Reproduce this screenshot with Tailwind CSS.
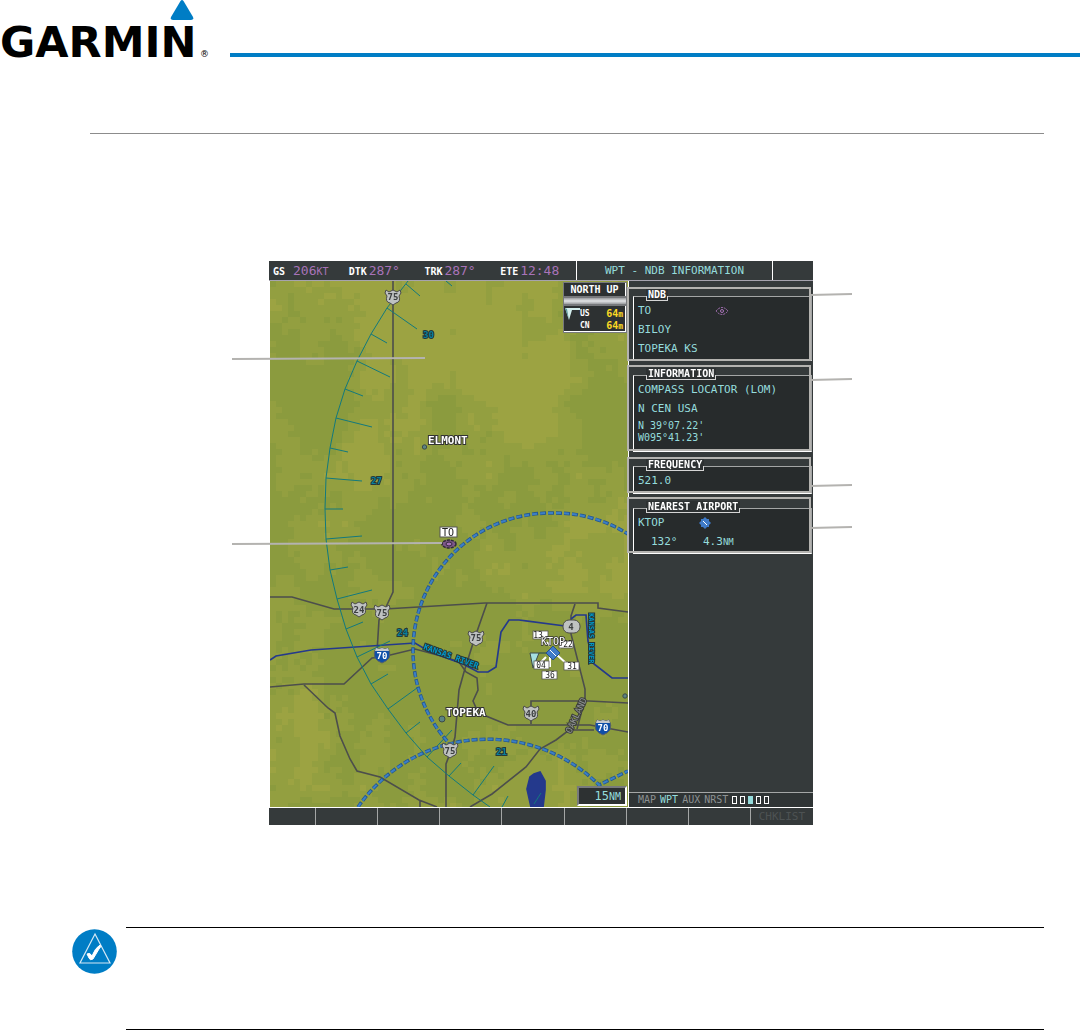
<!DOCTYPE html>
<html lang="en">
<head>
<meta charset="utf-8">
<meta name="viewport" content="width=device-width, initial-scale=1.0">
<title>NDB Information</title>
<script src="https://cdn.jsdelivr.net/npm/@tailwindcss/browser@4"></script>
</head>
<body class="bg-white font-['Liberation_Sans',sans-serif]">

<header class="flex h-[61px]">
    <svg class="w-[230px] h-[61px] shrink-0 overflow-visible" viewBox="0 0 230 61" role="img" aria-label="Garmin">
        <path d="M180.500 1 Q182 -1 183.500 1 L193 17 Q194 20 191 20 H173 Q170 20 171 17 Z" fill="#007dc5"/>
        <text x="0" y="57" font-family="DejaVu Sans" font-weight="bold" font-size="43">GARMIN</text>
        <text x="200" y="57" font-family="DejaVu Sans" font-size="9">®</text>
    </svg>
    <div class="flex-1 mt-[53px] h-1 bg-[#007dc5]"></div>
</header>

<main>
    <hr class="mt-[72px] ml-[90px] mr-9 border-t border-[#8c8c8c]">

    <figure class="relative mt-[127px] mx-auto max-w-[544px] left-px bg-[#353a3b] font-['DejaVu_Sans_Mono',monospace]">
        <!-- status bar -->
        <div id="statusBar" class="flex h-5 border-b border-[#a6a3ae] text-[13px] leading-[20px] text-[#a873b8]">
            <div class="w-[308px] pl-1 grid grid-cols-4 border-r border-white whitespace-nowrap">
                <div><span class="mr-2 text-[10px] font-bold text-white">GS</span>206<span class="text-[10px]">KT</span></div>
                <div><span class="text-[10px] font-bold text-white">DTK</span> <span class="-ml-1.5">287°</span></div>
                <div><span class="text-[10px] font-bold text-white">TRK</span> <span class="-ml-1.5">287°</span></div>
                <div><span class="text-[10px] font-bold text-white">ETE</span> <span class="-ml-1.5">12:48</span></div>
            </div>
            <h1 class="w-[196px] text-center text-[11px] text-[#95dcdc] border-r border-white">WPT - NDB INFORMATION</h1>
        </div>

        <div class="flex h-[526px]">
            <!-- map -->
            <div id="map" class="relative flex-1 overflow-hidden border-l border-white">
                <canvas id="terrain" width="358" height="526" class="absolute inset-0 size-full"></canvas>
                <svg class="absolute inset-0 size-full" viewBox="270 281 358 526" preserveAspectRatio="none" font-family="DejaVu Sans Mono">
                    <defs>
                        <g id="us">
                            <path d="M-7 -7 L-4 -5 L0 -7 L4 -5 L7 -7 L8 -4 L6 -1 Q8 5 3 6 L0 8 L-3 6 Q-8 5 -6 -1 L-8 -4 Z" fill="#bfc2c2" stroke="#4b4b4b"/>
                        </g>
                        <g id="interstate">
                            <path d="M-6 -7 L-3 -6 L0 -7 L3 -6 L6 -7 Q9 -2 7 3 Q5 6 0 8 Q-5 6 -7 3 Q-9 -2 -6 -7 Z" fill="#0e4fa8" stroke="#56606a"/>
                            <path d="M-6 -7 L-3 -6 L0 -7 L3 -6 L6 -7 L7 -4 H-7 Z" fill="#c4c8cc"/>
                        </g>
                        <g id="ndb">
                            <ellipse rx="7" ry="4" fill="#7d5789" stroke="#2f2937" stroke-width="1.500" stroke-dasharray="3 1"/>
                            <ellipse rx="3" ry="2" fill="#a873b8" stroke="#2f2937"/>
                        </g>
                    </defs>

                    <!-- roads -->
                    <g fill="none" stroke="#4c4e4c" stroke-width="1.6">
                        <path d="M393 281 V592 L386 607 L379 620 L377 652"/>
                        <path d="M270 597 H292 L334 609 H385 L485 603 H598 V608 L628 612"/>
                        <path d="M487 603 L474 640 L464 672 L459 690 L455 737 L452 748 L446 764 V807"/>
                        <path d="M270 687 L304 684 H344 L372 658 L382 657 L415 649 L445 657 L459 662 L466 672 L477 678 L478 690 L473 701 L477 710 L486 716 L508 725 H590 L628 732"/>
                        <path d="M304 685 L328 708 L335 713 L340 736 L350 759 L357 771 L380 777 L419 800 L437 807 M420 800 V807"/>
                        <path d="M575 604 L571 616 V634 L585 689 V699 L577 729"/>
                        <path d="M531 724 V701 H589 L628 703"/>
                        <path d="M470 807 L492 794 L526 767 L540 749 L556 740 L569 730 H594"/>
                    </g>

                    <!-- water -->
                    <g fill="none" stroke="#24398c" stroke-width="1.7">
                        <path d="M270 660 L276 656 L311 650 L415 643 L430 652 L463 664 L478 672 H488 L496 667 L501 632 L509 620 H519 L565 626"/>
                        <path d="M571 619 L576 615 H586 L588 641 L594 664 L612 678 H628"/>
                        <path d="M540 772 L545 781 V790 L543 807 H531 L527 789 L530 777 L534 774 Z" fill="#24398c"/>
                    </g>

                    <!-- compass arc -->
                    <g fill="none" stroke="#12797d" stroke-width="1">
                        <path d="M408 281 L387 308 L371 334 L357 361 L345 389 L336 418 L330 448 L326 478 L325 509 L326 539 L330 570 L337 599 L346 629 L357 657 L371 684 L388 709 L406 733 L427 757 L449 776 L473 795 L490 807"/>
                        <path d="M406 284 L420 296 M387 308 L417 329 M371 334 L387 343 M357 361 L390 377 M345 389 L363 396 M336 418 L372 427 M330 448 L348 452 M326 478 L362 481 M325 509 H343 M326 539 L362 536 M330 570 L348 567 M337 599 L372 590 M346 629 L363 622 M357 657 L390 641 M371 684 L388 674 M388 709 L417 688 M406 733 L420 722 M427 757 L452 730 M449 776 L461 763 M473 795 L494 766 M502 807 L508 796 M446 281 L452 286 M534 804 L541 793"/>
                    </g>

                    <!-- airspace rings -->
                    <g fill="none">
                        <g stroke="#24588f" stroke-width="3.5" stroke-dasharray="6 2">
                            <path id="ringA" d="M447 741 A137.500 137.500 0 0 1 551 513 A137.500 137.500 0 0 1 628 534"/>
                            <path id="ringB" d="M358 807 A158 158 0 0 1 599 785 L628 771"/>
                        </g>
                        <g stroke="#3c7fc6" stroke-width="2" stroke-dasharray="5 3">
                            <use href="#ringA"/>
                            <use href="#ringB"/>
                        </g>
                    </g>

                    <!-- road shields -->
                    <use href="#us" x="393" y="297"/><use href="#us" x="359" y="609"/><use href="#us" x="382" y="612"/>
                    <use href="#us" x="476" y="638"/><use href="#us" x="531" y="713"/><use href="#us" x="450" y="750"/>
                    <use href="#interstate" x="382" y="655"/><use href="#interstate" x="603" y="727"/>
                    <rect x="563" y="620" width="17" height="13" rx="6" fill="#bfc2c2" stroke="#4b4b4b"/>
                    <g font-size="9" font-weight="bold" text-anchor="middle" fill="#3c3f41">
                        <text x="393" y="300">75</text><text x="359" y="613">24</text><text x="382" y="616">75</text>
                        <text x="476" y="641">75</text><text x="531" y="717">40</text><text x="450" y="754">75</text>
                        <text x="571" y="630">4</text>
                    </g>
                    <g font-size="9" font-weight="bold" text-anchor="middle" fill="#fff">
                        <text x="382" y="659">70</text><text x="603" y="731">70</text>
                    </g>

                    <!-- bearings and rivers -->
                    <g font-size="9" font-weight="bold" fill="#087f9c" stroke="#26383a" stroke-width="2" paint-order="stroke">
                        <text x="423" y="338">30</text><text x="371" y="484">27</text>
                        <text x="397" y="636">24</text><text x="496" y="755">21</text>
                        <text transform="translate(423 649) rotate(20)" font-size="8" fill="#0098c8">KANSAS RIVER</text>
                        <text transform="translate(589 613) rotate(90)" font-size="7" fill="#0098c8">KANSAS RIVER</text>
                    </g>
                    <text transform="translate(571 734) rotate(-65)" font-size="9" fill="#8f9393" stroke="#3c3f3c" stroke-width="2" paint-order="stroke">OAKLAND</text>

                    <!-- towns -->
                    <g fill="#5c8482" stroke="#3b4a4a">
                        <circle cx="424.500" cy="447" r="2.200"/><circle cx="442" cy="719" r="3"/><circle cx="625" cy="696" r="2.200"/>
                    </g>
                    <g font-size="11" font-weight="bold" fill="#fff" stroke="#333" stroke-width="2" paint-order="stroke">
                        <text x="428" y="444">ELMONT</text>
                        <text x="446" y="716">TOPEKA</text>
                    </g>

                    <!-- TO beacon -->
                    <rect x="440" y="527" width="17" height="10" fill="#fff" stroke="#555"/>
                    <text x="448" y="536" font-size="10" text-anchor="middle" fill="#222">TO</text>
                    <use href="#ndb" x="449" y="544"/>

                    <!-- KTOP and its runways -->
                    <path d="M530 653 H539 L533 668 Z" fill="#a5dfe0" stroke="#3b4a4a"/>
                    <path d="M539 653 H546" stroke="#1d4455"/>
                    <path d="M557 655 L567 664 M550 657 V667 M546 657 L541 662 M547 642 L550 646 M560 648 L564 643" stroke="#fff" stroke-width="2"/>
                    <g fill="#fff" stroke="#555" stroke-width="0.800">
                        <rect x="533" y="631" width="15" height="8"/><rect x="559" y="641" width="14" height="7"/>
                        <rect x="534" y="661" width="15" height="8"/><rect x="564" y="662" width="15" height="8"/>
                        <rect x="542" y="671" width="15" height="8"/>
                    </g>
                    <g font-size="8" text-anchor="middle" fill="#222">
                        <text x="538" y="638">13</text><text x="568" y="647">22</text><text x="541" y="668">04</text>
                        <text x="572" y="669">31</text><text x="550" y="678">36</text>
                    </g>
                    <text x="541" y="645" font-size="10" fill="#fff" stroke="#333" stroke-width="1.500" paint-order="stroke">KTOP</text>
                    <path d="M553 646 L560 653 L553 660 L546 653 Z" fill="#3f7bc8" stroke="#26508a"/>
                    <path d="M550 650 L556 656" stroke="#fff"/>
                </svg>

                <div id="windBox" class="absolute top-px right-px w-[64px] border border-[#77797c] bg-[#77797c] flex flex-col gap-0.5 text-[10px] font-bold text-white">
                    <div class="h-[13px] bg-[#2d3132] border-r border-white text-center leading-[13px] whitespace-nowrap">NORTH UP</div>
                    <div class="h-1.5 bg-linear-to-b from-[#9b9da0] via-[#e2e4e6] to-[#9b9da0]"></div>
                    <div class="relative h-[26px] pl-4 pr-0.5 pt-0.5 bg-[#2d3132] border-r border-b border-white leading-[11px]">
                        <svg class="absolute left-px top-0.5 w-[15px] h-3" viewBox="0 0 15 12"><path d="M0 0 H15 V2 H7 L4 12 Z" fill="#d5efee"/><path d="M0 0 L2 1 L4 12 Z" fill="#5d9a9c"/></svg>
                        <div class="flex justify-between"><span class="text-[8px]">US</span><span class="text-[#fbd924]">64<span class="text-[8px]">m</span></span></div>
                        <div class="flex justify-between"><span class="text-[8px]">CN</span><span class="text-[#fbd924]">64<span class="text-[8px]">m</span></span></div>
                    </div>
                </div>
                <div id="range" class="absolute bottom-px right-px w-[50px] h-5 pr-1 border-2 border-t-[#77797c] border-l-[#77797c] border-r-white border-b-white bg-[#2d3132] text-right text-[12px] leading-[17px] text-[#95dcdc]">15<span class="text-[10px]">NM</span></div>
            </div>

            <!-- waypoint details -->
            <aside class="w-[185px] flex flex-col border-l border-white">
                <div class="flex-1 pl-1 pr-px pt-[15px] flex flex-col gap-[14px] text-[11px] leading-[19px] text-[#95dcdc] whitespace-nowrap">
                    <section class="h-[65px] pl-1 bg-[#272b2c] border border-t-[#a4a6a6] border-r-[#a4a6a6] border-l-white border-b-white">
                        <h2 class="relative w-fit h-3 -mt-2 ml-2 px-0.5 bg-[#2d3132] text-[10px] leading-[11px] font-bold text-white after:absolute after:inset-x-0 after:bottom-0 after:h-[5px] after:border-x after:border-b after:border-[#d5d5d5]">NDB</h2>
                        <div class="flex items-center">
                            <p class="w-[77px]">TO</p>
                            <svg class="w-[14px] h-2" viewBox="-7 -4 14 8" fill="none" stroke="#a873b8"><path d="M-6 0 Q0 -7 6 0 Q0 7 -6 0 Z" stroke-dasharray="2 1"/><circle r="1.500"/></svg>
                        </div>
                        <p>BILOY</p>
                        <p>TOPEKA KS</p>
                    </section>
                    <section class="h-[77px] pl-1 bg-[#272b2c] border border-t-[#a4a6a6] border-r-[#a4a6a6] border-l-white border-b-white">
                        <h2 class="relative w-fit h-3 -mt-2 ml-2 px-0.5 bg-[#2d3132] text-[10px] leading-[11px] font-bold text-white after:absolute after:inset-x-0 after:bottom-0 after:h-[5px] after:border-x after:border-b after:border-[#d5d5d5]">INFORMATION</h2>
                        <p>COMPASS LOCATOR (LOM)</p>
                        <p>N CEN USA</p>
                        <p class="mt-0.5 text-[10px] leading-[12px]">N 39°07.22'<br>W095°41.23'</p>
                    </section>
                    <section class="h-7 pl-1 bg-[#272b2c] border border-t-[#a4a6a6] border-r-[#a4a6a6] border-l-white border-b-white">
                        <h2 class="relative w-fit h-3 -mt-2 ml-2 px-0.5 bg-[#2d3132] text-[10px] leading-[11px] font-bold text-white after:absolute after:inset-x-0 after:bottom-0 after:h-[5px] after:border-x after:border-b after:border-[#d5d5d5]">FREQUENCY</h2>
                        <p>521.0</p>
                    </section>
                    <section class="h-[46px] pl-1 bg-[#272b2c] border border-t-[#a4a6a6] border-r-[#a4a6a6] border-l-white border-b-white">
                        <h2 class="relative w-fit h-3 -mt-2 ml-2 px-0.5 bg-[#2d3132] text-[10px] leading-[11px] font-bold text-white after:absolute after:inset-x-0 after:bottom-0 after:h-[5px] after:border-x after:border-b after:border-[#d5d5d5]">NEAREST AIRPORT</h2>
                        <div class="flex items-center">
                            <p class="w-[61px]">KTOP</p>
                            <svg class="size-3" viewBox="0 0 12 12"><path d="M6 0 L8 2 H10 V4 L12 6 L10 8 V10 H8 L6 12 L4 10 H2 V8 L0 6 L2 4 V2 H4 Z" fill="#3f7bc8"/><path d="M4 4 L8 8" stroke="#fff"/></svg>
                        </div>
                        <div class="flex pl-[13px]">
                            <p class="w-[52px]">132°</p>
                            <p>4.3<span class="text-[9px]">NM</span></p>
                        </div>
                    </section>
                </div>
                <nav class="h-[15px] pl-[9px] flex items-center gap-1 border-t border-[#a4a6a6] bg-[#2f3435] text-[10px] leading-[14px] text-[#8d9192]">
                    <span>MAP</span>
                    <span class="text-[#95dcdc]">WPT</span>
                    <span>AUX</span>
                    <span>NRST</span>
                    <div class="flex gap-[3px]">
                        <i class="w-[5px] h-2 border border-white"></i>
                        <i class="w-[5px] h-2 border border-white"></i>
                        <i class="w-[5px] h-2 bg-[#95dcdc]"></i>
                        <i class="w-[5px] h-2 border border-white"></i>
                        <i class="w-[5px] h-2 border border-white"></i>
                    </div>
                </nav>
            </aside>
        </div>

        <!-- softkeys -->
        <div id="softkeys" class="h-[18px] grid grid-cols-[47px_repeat(8,1fr)] border-t border-white divide-x divide-[#a4a6a6]">
            <div></div><div></div><div></div><div></div><div></div><div></div><div></div><div></div>
            <button class="text-[11px] leading-[17px] text-[#4d5253]" disabled>CHKLIST</button>
        </div>

        <!-- callouts -->
        <svg class="absolute inset-0 w-full h-full overflow-visible pointer-events-none" viewBox="269 261 544 564" preserveAspectRatio="none" fill="none" stroke="#b4b3b0" stroke-width="2">
            <rect x="628" y="288" width="182" height="72"/>
            <rect x="628" y="366" width="182" height="84"/>
            <rect x="628" y="458" width="182" height="34"/>
            <rect x="628" y="498" width="182" height="54"/>
            <path d="M232 359 L425 358 M232 544 L442 543 M810 295 L852 294 M810 380 L852 379 M810 486 L852 485 M810 528 L852 527"/>
        </svg>
    </figure>

    <!-- note -->
    <section class="flex mt-[102px] ml-[72px] mr-9 gap-[9px]">
        <svg class="size-[45px] shrink-0 mt-0.5" viewBox="0 0 45 45" role="img" aria-label="Note">
            <circle cx="22.500" cy="22.500" r="22.300" fill="#007dc5"/>
            <path d="M23 5 L38 34 H8 Z" fill="none" stroke="#d4e8f5" stroke-width="1.200"/>
            <path d="M15 25 Q18 23 20 27 Q23 19 28 16 Q30 17 27 20 Q24 25 21 30 Q18 32 17 29 Z" fill="#fff" stroke="#fff"/>
        </svg>
        <div class="flex-1 h-[103px] border-y border-black"></div>
    </section>
</main>

<script>
// relative terrain height, sampled every 1/11 of the width and 1/14 of the height
const heights = [
    "655667666545", "544667776545", "444667777644", "434664678534", "433654457522",
    "545653554544", "444544434555", "454443455565", "544444555656", "443333334344",
    "444333343333", "464443333343", "574443443344", "555434445544", "544544555544",
];
const canvas = document.getElementById("terrain");
const ctx = canvas.getContext("2d");
const block = 6;

function hash(x, y) {
    const n = Math.sin(x * 127.1 + y * 311.7) * 43758.5453;
    return n - Math.floor(n);
}

function noise(x, y) {
    const ix = Math.floor(x), iy = Math.floor(y), fx = x - ix, fy = y - iy;
    const top = hash(ix, iy) * (1 - fx) + hash(ix + 1, iy) * fx;
    const bottom = hash(ix, iy + 1) * (1 - fx) + hash(ix + 1, iy + 1) * fx;
    return top * (1 - fy) + bottom * fy;
}

function height(u, v) {
    const x = Math.min(u * 11, 10.99), y = Math.min(v * 14, 13.99);
    const ix = Math.floor(x), iy = Math.floor(y), fx = x - ix, fy = y - iy;
    const top = heights[iy][ix] * (1 - fx) + heights[iy][ix + 1] * fx;
    const bottom = heights[iy + 1][ix] * (1 - fx) + heights[iy + 1][ix + 1] * fx;
    return top * (1 - fy) + bottom * fy;
}

for (let y = 0; y < canvas.height; y += block) {
    for (let x = 0; x < canvas.width; x += block) {
        const h = height(x / canvas.width, y / canvas.height) + (noise(x / 18, y / 24) - 0.5) * 3 + (hash(x, y) - 0.5);
        ctx.fillStyle = h > 5.6 ? "#9ca342" : h > 4.2 ? "#939f40" : "#8b9b3e";
        ctx.fillRect(x, y, block, block);
    }
}
</script>
</body>
</html>
